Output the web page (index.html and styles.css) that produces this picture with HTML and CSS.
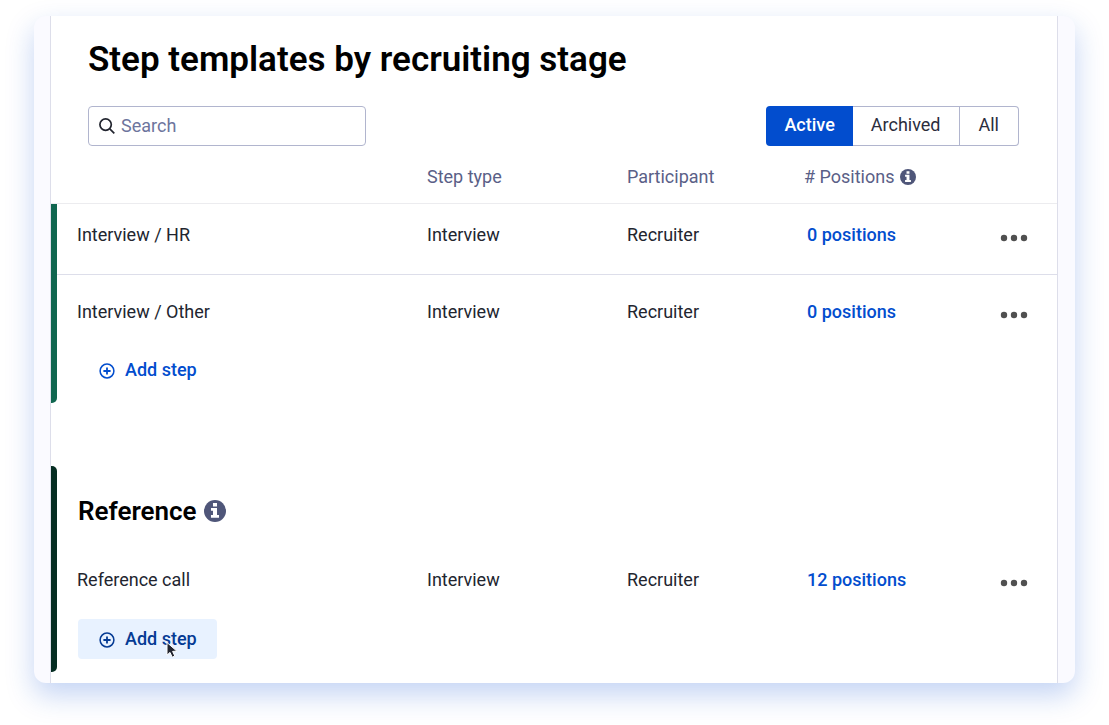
FILE: index.html
```
<!DOCTYPE html>
<html lang="en">
<head>
<meta charset="utf-8">
<title>Step templates by recruiting stage</title>
<link rel="stylesheet" href="styles.css">
</head>
<body>

<!-- shared icons -->
<svg class="sprite" aria-hidden="true">
	<symbol id="info" viewBox="0 0 24 24">
		<circle cx="12" cy="12" r="12" fill="#4f5679"/>
		<path fill="#fff" d="M9.8 3.2h4.4v4h-4.4zM7.6 8.8h6.6v7.6h2.2v3H7.6v-3h2.2v-4.6H7.6z"/>
	</symbol>
	<symbol id="plus" viewBox="0 0 16 16">
		<circle cx="8" cy="8" r="6.9" fill="none" stroke="currentColor" stroke-width="1.5"/>
		<path fill="none" stroke="currentColor" stroke-width="1.8" d="M8 4.4v7.2M4.4 8h7.2"/>
	</symbol>
	<symbol id="dots" viewBox="0 0 28 8">
		<g fill="#505050"><circle cx="4" cy="4" r="3.2"/><circle cx="14" cy="4" r="3.2"/><circle cx="24" cy="4" r="3.2"/></g>
	</symbol>
</svg>

<div class="card">
<main class="panel">
	<h1>Step templates by recruiting stage</h1>

	<div class="toolbar">
		<label class="search">
			<svg width="16" height="16" viewBox="0 0 16 16" aria-hidden="true"><circle cx="6.6" cy="6.6" r="5.7"/><path d="M10.8 10.8l4.5 4.5"/></svg>
			<input type="text" placeholder="Search" aria-label="Search">
		</label>
		<div class="filter">
			<button type="button" class="active">Active</button>
			<button type="button">Archived</button>
			<button type="button">All</button>
		</div><!-- end filter -->
	</div><!-- end toolbar -->

	<table class="steps">
		<colgroup>
			<col class="col-bar">
			<col>
			<col class="col-type">
			<col class="col-participant">
			<col class="col-positions">
			<col class="col-more">
		</colgroup>
		<thead>
			<tr>
				<th></th>
				<th></th>
				<th>Step type</th>
				<th>Participant</th>
				<th class="count"><span class="with-info"># Positions <svg class="info-small"><use href="#info"/></svg></span></th>
				<th></th>
			</tr>
		</thead>
		<tbody>
			<tr class="lined">
				<td class="bar interview" rowspan="3"></td>
				<td>Interview / HR</td>
				<td>Interview</td>
				<td>Recruiter</td>
				<td><a href="#">0 positions</a></td>
				<td class="more"><button type="button" aria-label="More"><svg><use href="#dots"/></svg></button></td>
			</tr>
			<tr class="last">
				<td>Interview / Other</td>
				<td>Interview</td>
				<td>Recruiter</td>
				<td><a href="#">0 positions</a></td>
				<td class="more"><button type="button" aria-label="More"><svg><use href="#dots"/></svg></button></td>
			</tr>
			<tr>
				<td class="add" colspan="5"><button type="button"><svg><use href="#plus"/></svg>Add step</button></td>
			</tr>
		</tbody>
		<tbody>
			<tr><td class="spacer" colspan="6"></td></tr>
		</tbody>
		<tbody>
			<tr>
				<td class="bar reference" rowspan="3"></td>
				<td class="stage" colspan="5"><h2>Reference <svg class="info-large"><use href="#info"/></svg></h2></td>
			</tr>
			<tr class="last">
				<td>Reference call</td>
				<td>Interview</td>
				<td>Recruiter</td>
				<td><a href="#">12 positions</a></td>
				<td class="more"><button type="button" aria-label="More"><svg><use href="#dots"/></svg></button></td>
			</tr>
			<tr>
				<td class="add hovered" colspan="5">
					<button type="button"><svg><use href="#plus"/></svg>Add step
						<svg class="pointer" viewBox="0 0 14 18" aria-hidden="true"><path d="M2 1.5v12.6l3-2.7 2.2 4.8 2.6-1.2-2.2-4.6 4.2-.3z"/></svg>
					</button>
				</td>
			</tr>
		</tbody>
	</table>
</main><!-- end panel -->
</div><!-- end card -->

</body>
</html>
```
FILE: styles.css
```
* {
box-sizing: border-box;
}

body {
margin: 0;
padding: 16px 34px 42px;
background: #fff;
color: #22252f;
font-family: Roboto, "Liberation Sans", sans-serif;
font-size: 18px;
line-height: 24px;
}

button, input {
font: inherit;
}

button {
cursor: pointer;
}

svg {
flex: none;
}

.sprite {
display: none;
}

.card {
padding: 0 17px 0 16px;
overflow: hidden;
background: #fafaff;
border-radius: 12px;
box-shadow: 0 12px 28px rgba(20, 85, 210, .25);
}

.panel {
padding: 24px 0 11px;
background: #fff;
border: solid #dddeea;
border-width: 0 1px;
}

h1 {
margin: 0 37px 26px;
color: #000;
font-size: 35px;
line-height: 40px;
font-weight: 600;
}

.toolbar {
display: flex;
justify-content: space-between;
padding: 0 38px 0 37px;
}

.search {
display: flex;
align-items: center;
gap: 6px;
width: 278px;
height: 40px;
padding: 0 10px;
border: 1px solid #b1b5ce;
border-radius: 4px;
}
.search svg {
fill: none;
stroke: #22252f;
stroke-width: 1.7;
}
.search input {
flex: 1;
min-width: 0;
padding: 0;
border: 0;
outline: none;
background: none;
}
.search input::placeholder {
color: #6d759d;
opacity: 1;
}

.filter {
display: flex;
}
.filter button {
height: 40px;
padding: 0 18px 2px;
background: #fff;
border: 1px solid #b1b5ce;
border-left-width: 0;
color: #2b2d3d;
}
.filter button:first-child {
border-radius: 4px 0 0 4px;
}
.filter button:last-child {
padding: 0 19px 2px;
border-radius: 0 4px 4px 0;
}
.filter .active {
background: #024dce;
border: 0;
color: #fff;
font-weight: 500;
}

/* steps table */
.steps {
width: 100%;
table-layout: fixed;
border-spacing: 0;
}
.col-bar {
width: 6px;
}
.col-type {
width: 200px;
}
.col-participant {
width: 180px;
}
.col-positions {
width: 190px;
}
.col-more {
width: 80px;
}

th {
padding: 19px 0 14px 20px;
border-bottom: 1px solid #ececef;
color: #5a6087;
font-weight: 400;
text-align: left;
}
th.count {
padding-left: 17px;
}
.with-info {
display: flex;
align-items: center;
gap: 6px;
}
.info-small {
width: 16px;
height: 16px;
}

td {
padding: 19px 0 27px 20px;
vertical-align: top;
}
.lined td:not(.bar) {
border-bottom: 1px solid #dddeea;
}
.last td {
padding: 25px 0 26px 20px;
}

td.bar {
padding: 0;
}
.interview {
background: #10664f;
border-radius: 0 0 5px 0;
}
.reference {
background: #052d22;
border-radius: 0 5px 5px 0;
}
td.spacer {
height: 63px;
padding: 0;
}

a {
color: #024dce;
font-weight: 500;
text-decoration: none;
}

.more button {
display: flex;
align-items: center;
width: 28px;
height: 24px;
margin: 3px 0 -3px;
padding: 0;
background: none;
border: 0;
}
.more svg {
width: 28px;
height: 8px;
}
.steps td.more {
padding-left: 23px;
}

td.add {
padding: 0 21px 13px;
}
td.hovered {
padding-top: 1px;
}
.add button {
position: relative;
display: flex;
align-items: center;
gap: 10px;
height: 40px;
padding: 0 20px 0 21px;
background: #fff;
border: 0;
border-radius: 4px;
color: #024dce;
font-weight: 500;
}
.add svg {
width: 16px;
height: 16px;
margin-top: 2px;
}
.add.hovered button {
background: #e8f2ff;
color: #053b94;
}
.add .pointer {
position: absolute;
left: 87px;
top: 20px;
width: 14px;
height: 18px;
fill: #22252f;
stroke: #fff;
stroke-width: 1;
}

td.stage {
padding: 29px 0 16px 21px;
}
h2 {
display: flex;
align-items: center;
gap: 7px;
margin: 0;
color: #000;
font-size: 26px;
line-height: 32px;
font-weight: 600;
}
.info-large {
width: 22px;
height: 22px;
}
```
